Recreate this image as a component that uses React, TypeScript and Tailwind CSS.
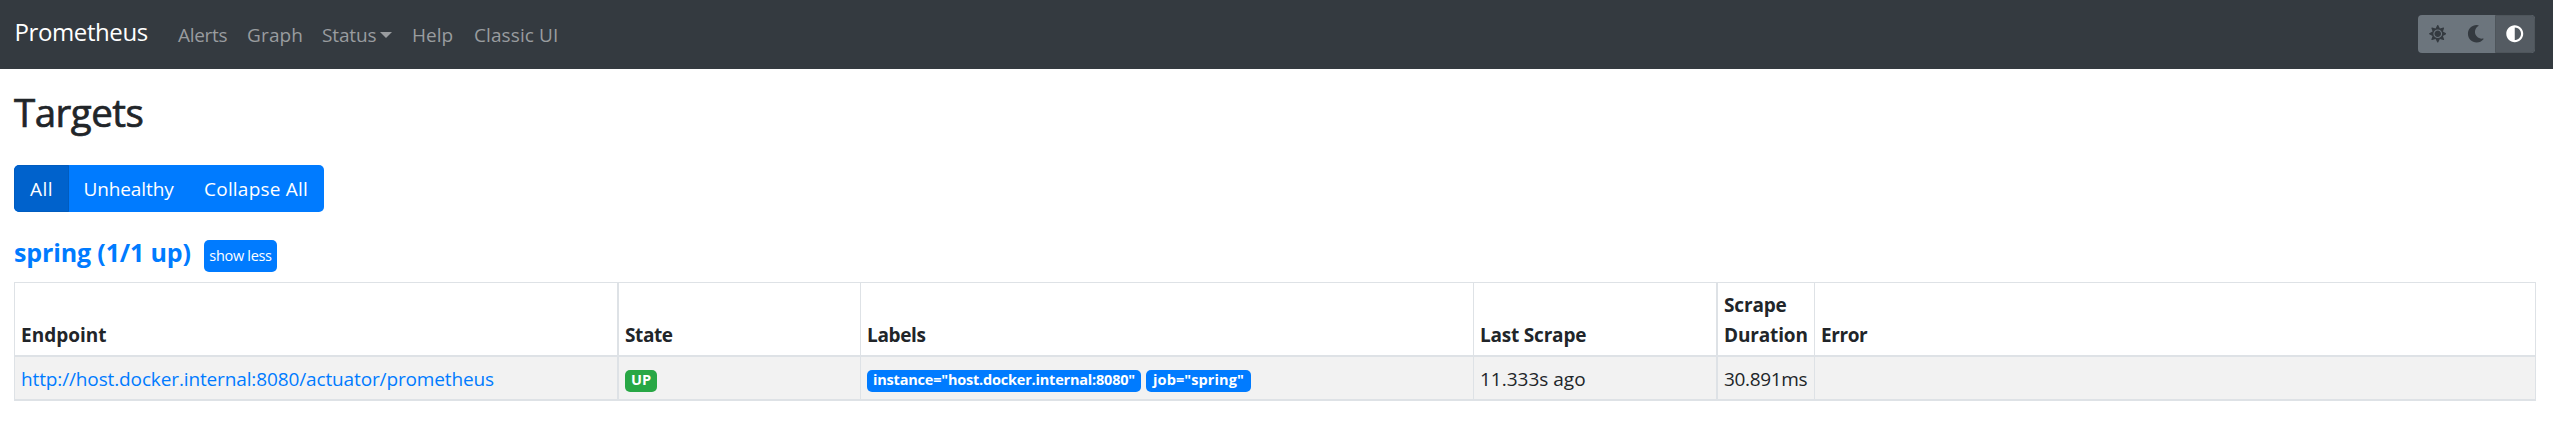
import { FaAdjust, FaMoon, FaSun } from "react-icons/fa";

const th = "border-[#dee2e6] border-t border-b-2 h-[75px] pb-[5px] pl-[6px] align-bottom text-left font-bold";
const td = "border-[#dee2e6] border-b-2 h-[44px] bg-[#f2f2f2] pl-[6px] pt-[7px] align-top";
const badge = "flex h-[22px] items-start justify-center rounded-[5px] text-[14.5px] leading-[20px] font-bold text-white whitespace-nowrap";

function Navbar() {
  return (
    <nav className="flex h-[69px] items-center bg-[#343a40] pl-[14.5px] pr-[18px] leading-[30px] text-[#999c9f]">
      <a className="w-[163.5px] pb-[6px] text-[24px] tracking-[-0.4px] text-white">Prometheus</a>
      <a className="w-[69px] pt-px tracking-[-0.3px]">Alerts</a>
      <a className="w-[75px] pt-px tracking-[0.15px]">Graph</a>
      <a className="flex w-[90px] items-center pt-px tracking-[-0.15px]">
        Status
        <span className="ml-[4px] border-x-[6px] border-t-[6px] border-x-transparent border-t-[#999c9f]" />
      </a>
      <a className="w-[62px] pt-px">Help</a>
      <a className="pt-px tracking-[0.1px]">Classic UI</a>
      <div className="mb-px ml-auto flex h-[38px] w-[117px] overflow-hidden rounded-[4px] bg-[#6c757d] text-[#343a40]">
        <button className="flex w-[39px] items-center justify-center"><FaSun size={17.5} /></button>
        <button className="flex w-[38px] items-center justify-center"><FaMoon size={17.5} /></button>
        <button className="flex w-[40px] items-center justify-center rounded-r-[4px] border border-[#4e555b] bg-[#545b62] text-white"><FaAdjust size={17.5} /></button>
      </div>
    </nav>
  );
}

export default function App() {
  return (
    <div className="min-h-[427px] bg-white font-['Open_Sans',sans-serif] text-[19px] text-[#212529]">
      <Navbar />
      <main className="px-[14px]">
        <h2 className="h-[96px] text-[38.5px] leading-[86px] font-medium tracking-[-0.5px] [-webkit-text-stroke:0.7px_#212529]">Targets</h2>
        <div className="flex h-[47px] w-[310px] overflow-hidden rounded-[5px] bg-[#007bff] leading-[30px] text-white">
          <button className="w-[55px] rounded-l-[5px] border border-[#005cbf] bg-[#0062cc] pt-px tracking-[0.4px]">All</button>
          <button className="w-[119px] pt-px tracking-[-0.1px]">Unhealthy</button>
          <button className="w-[136px] pt-px tracking-[0.2px]">Collapse All</button>
        </div>
        <div className="mt-[28px] flex h-[32px] items-center">
          <h3 className="w-[190px] pb-[8px] text-[25px] leading-[30px] font-bold tracking-[-0.14px] text-[#007bff]">spring (1/1 up)</h3>
          <button className="h-[32px] w-[73px] rounded-[5px] bg-[#007bff] text-[14.5px] leading-[32px] tracking-[-0.3px] text-white">show less</button>
        </div>
        <table className="mt-[10px] w-[2522px] table-fixed border-separate border-spacing-0 border-l border-[#dee2e6] leading-[30px]">
          <colgroup>
            <col className="w-[604px]" />
            <col className="w-[242px]" />
            <col className="w-[613px]" />
            <col className="w-[244px]" />
            <col className="w-[97px]" />
            <col className="w-[721px]" />
          </colgroup>
          <thead>
            <tr>
              <th className={`${th} border-r-2`}>Endpoint</th>
              <th className={`${th} border-r tracking-[-0.4px]`}>State</th>
              <th className={`${th} border-r tracking-[-0.35px]`}>Labels</th>
              <th className={`${th} border-r-2 tracking-[-0.2px]`}>Last Scrape</th>
              <th className={`${th} border-r tracking-[-0.15px]`}>Scrape<br />Duration</th>
              <th className={`${th} border-r tracking-[-0.4px]`}>Error</th>
            </tr>
          </thead>
          <tbody>
            <tr>
              <td className={`${td} border-r-2 tracking-[-0.13px]`}>
                <a className="text-[#007bff]">http://host.docker.internal:8080/actuator/prometheus</a>
              </td>
              <td className={`${td} border-r`}>
                <span className={`${badge} mt-[6px] w-[32px] bg-[#28a745]`}>UP</span>
              </td>
              <td className={`${td} border-r`}>
                <div className="mt-[6px] flex gap-[5px]">
                  <span className={`${badge} w-[274px] bg-[#007bff] tracking-[-0.2px]`}>instance="host.docker.internal:8080"</span>
                  <span className={`${badge} w-[105px] bg-[#007bff] tracking-[0.1px]`}>job="spring"</span>
                </div>
              </td>
              <td className={`${td} border-r-2`}>11.333s ago</td>
              <td className={`${td} border-r tracking-[-0.35px]`}>30.891ms</td>
              <td className={`${td} border-r`} />
            </tr>
          </tbody>
        </table>
      </main>
    </div>
  );
}
